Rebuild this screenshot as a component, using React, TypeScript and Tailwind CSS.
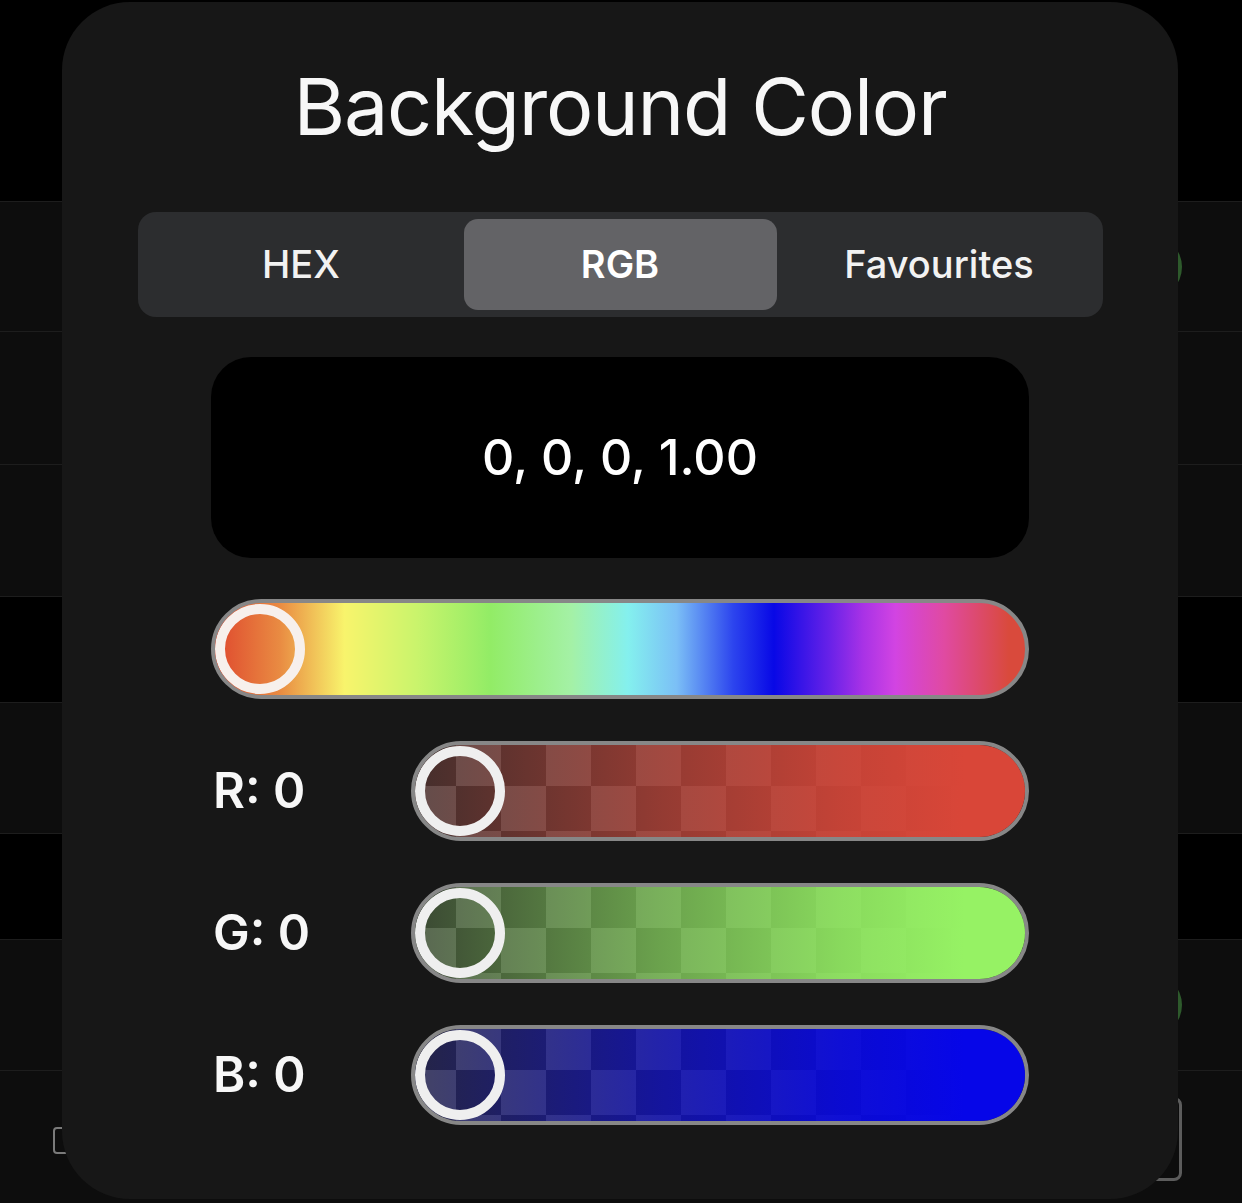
import React from 'react';

interface Channel {
  label: string;
  value: number;
  rgb: string; // "r,g,b" of the full-strength colour at the right end
}

const channels: Channel[] = [
  { label: 'R', value: 0, rgb: '217,70,56' },
  { label: 'G', value: 0, rgb: '150,242,100' },
  { label: 'B', value: 0, rgb: '6,6,232' },
];

const tabs = ['HEX', 'RGB', 'Favourites'];

function Knob({ warm }: { warm?: boolean }) {
  return (
    <div
      className={
        warm
          ? 'h-[90px] w-[90px] shrink-0 rounded-full border-[10px] border-[#f7f0ec]'
          : 'h-[90px] w-[90px] shrink-0 rounded-full border-[10px] border-[#efefef]'
      }
    />
  );
}

function BackgroundList() {
  // the settings list that sits behind the sheet
  return (
    <div className="flex flex-col">
      <div className="h-[201px]" />
      <div className="flex h-[130px] items-center justify-end border-t border-[#1d1d1d] bg-[#0d0d0d] pr-[60px]">
        <div className="h-[64px] w-[104px] rounded-full bg-[#2e5a2c]" />
      </div>
      <div className="h-[133px] border-t border-[#1d1d1d] bg-[#0d0d0d]" />
      <div className="h-[132px] border-t border-[#1d1d1d] bg-[#0d0d0d]" />
      <div className="h-[106px] border-t border-[#1d1d1d]" />
      <div className="h-[131px] border-t border-[#1d1d1d] bg-[#0d0d0d]" />
      <div className="h-[106px] border-t border-[#1d1d1d]" />
      <div className="flex h-[131px] items-center justify-end border-t border-[#1d1d1d] bg-[#0d0d0d] pr-[60px]">
        <div className="h-[64px] w-[104px] rounded-full bg-[#2e5a2c]" />
      </div>
      <div className="flex h-[133px] items-start justify-between border-t border-[#1d1d1d] bg-[#0d0d0d] pl-[53px] pr-[60px]">
        <div className="mt-[56px] h-[27px] w-[60px] rounded-[4px] border-2 border-[#7a7a7a]" />
        <div className="mt-[26px] h-[84px] w-[84px] rounded-[8px] border-[3px] border-[#5c5c5c]" />
      </div>
    </div>
  );
}

export default function App() {
  return (
    <div
      className="relative h-[1203px] w-[1242px] overflow-hidden bg-black text-white"
      style={{ fontFamily: 'Inter, "Noto Sans", sans-serif' }}
    >
      <BackgroundList />

      {/* colour picker sheet */}
      <div className="absolute left-[62px] top-[2px] flex h-[1197px] w-[1116px] flex-col items-center rounded-[68px] bg-[#171717] pt-[65px]">
        <h1 className="text-[79px] leading-none font-normal tracking-[-1.2px] text-[#f7f7f7]">Background Color</h1>

        <div className="mt-[66px] grid h-[105px] w-[965px] grid-cols-3 gap-[6px] rounded-[18px] bg-[#2c2d2f] p-[7px]">
          {tabs.map((tab) => (
            <div
              key={tab}
              className={
                tab === 'RGB'
                  ? 'flex items-center justify-center rounded-[14px] bg-[#636366] text-[38px] font-semibold text-white'
                  : 'flex items-center justify-center text-[38px] font-medium text-[#f2f2f2]'
              }
            >
              {tab}
            </div>
          ))}
        </div>

        <div className="mt-[40px] flex h-[201px] w-[818px] items-center justify-center rounded-[40px] bg-black">
          <span className="text-[50px] font-medium text-white">0, 0, 0, 1.00</span>
        </div>

        {/* hue */}
        <div className="mt-[41px] flex h-[100px] w-[818px] items-center overflow-hidden rounded-full border-4 border-[#878787] bg-[linear-gradient(to_right,#df482e_0%,#e98b42_8%,#f8f46c_16%,#c9f46c_25%,#92ec66_34%,#a4f1a6_44%,#84f0ee_51%,#7bbff6_57%,#2c44ee_64%,#0808e6_69%,#6a22e8_76%,#a832e6_80%,#d244e2_84%,#e04aa2_90%,#d94a3c_98%)]">
          <Knob warm />
        </div>

        {channels.map((ch) => (
          <div key={ch.label} className="mt-[42px] flex w-[818px] items-center">
            <div className="w-[200px] pl-[2px] text-[49px] font-semibold text-[#f7f7f7]">
              {ch.label}: {ch.value}
            </div>
            <div className="h-[100px] w-[618px] overflow-hidden rounded-full border-4 border-[#878787] bg-[conic-gradient(#4e4e4e_25%,#2a2a2a_0_50%,#4e4e4e_0_75%,#2a2a2a_0)] bg-size-[90px_90px] bg-origin-border">
              <div
                className="flex h-full w-full items-center"
                style={{
                  backgroundImage: `linear-gradient(to right, rgba(${ch.rgb},0.15) 0%, rgba(${ch.rgb},0.6) 40%, rgba(${ch.rgb},0.88) 70%, rgba(${ch.rgb},1) 90%)`,
                }}
              >
                <Knob />
              </div>
            </div>
          </div>
        ))}
      </div>
    </div>
  );
}
